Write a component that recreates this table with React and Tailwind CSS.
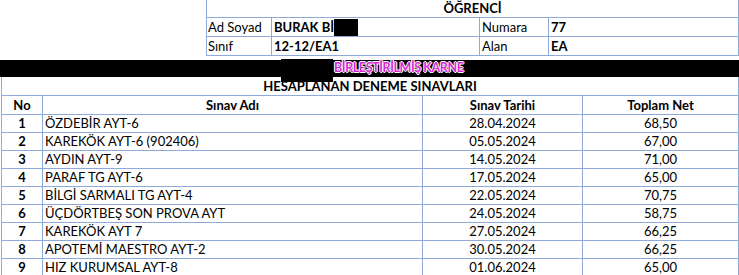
import React from "react";

const rows = [
  ["1", "ÖZDEBİR AYT-6", "28.04.2024", "68,50"],
  ["2", "KAREKÖK AYT-6 (902406)", "05.05.2024", "67,00"],
  ["3", "AYDIN AYT-9", "14.05.2024", "71,00"],
  ["4", "PARAF TG AYT-6", "17.05.2024", "65,00"],
  ["5", "BİLGİ SARMALI TG AYT-4", "22.05.2024", "70,75"],
  ["6", "ÜÇDÖRTBEŞ SON PROVA AYT", "24.05.2024", "58,75"],
  ["7", "KAREKÖK AYT 7", "27.05.2024", "66,25"],
  ["8", "APOTEMİ MAESTRO AYT-2", "30.05.2024", "66,25"],
  ["9", "HIZ KURUMSAL AYT-8", "01.06.2024", "65,00"],
];

export default function App() {
  return (
    <div
      className="relative w-[739px] h-[275px] overflow-hidden bg-white text-black text-[13px] leading-none"
      style={{ fontFamily: "Lato, 'Open Sans', sans-serif" }}
    >
      {/* top student info */}
      <div className="flex">
        <div className="w-[206px]" />
        <div className="w-[533px] border-l border-r border-[#8eaadb]">
          <div className="h-[18px] border-b border-[#8eaadb] flex items-center justify-center font-bold">
            ÖĞRENCİ
          </div>
          <div className="h-[19px] border-b border-[#8eaadb] flex">
            <div className="w-[65px] border-r border-[#8eaadb] flex items-center pl-[1px]">Ad Soyad</div>
            <div className="w-[208px] border-r border-[#8eaadb] flex items-center pl-[2px] font-bold">
              <span>BURAK Bİ</span>
              <span className="inline-block w-[24px] h-[17px] bg-black" />
            </div>
            <div className="w-[69px] border-r border-[#8eaadb] flex items-center pl-[2px]">Numara</div>
            <div className="flex-1 flex items-center pl-[2px] font-bold">77</div>
          </div>
          <div className="h-[19px] border-b border-[#8eaadb] flex">
            <div className="w-[65px] border-r border-[#8eaadb] flex items-center pl-[1px]">Sınıf</div>
            <div className="w-[208px] border-r border-[#8eaadb] flex items-center pl-[2px] font-bold">12-12/EA1</div>
            <div className="w-[69px] border-r border-[#8eaadb] flex items-center pl-[2px]">Alan</div>
            <div className="flex-1 flex items-center pl-[2px] font-bold">EA</div>
          </div>
        </div>
      </div>

      {/* black title bar */}
      <div className="mt-[4px] h-[17px] bg-black flex items-center pl-[334px]">
        <span
          className="font-bold text-[12.5px] tracking-[-0.4px] text-[#d42ad4]"
          style={{
            textShadow:
              "1px 0 0 #fff, -1px 0 0 #fff, 0 1px 0 #fff, 0 -1px 0 #fff",
          }}
        >
          BİRLEŞTİRİLMİŞ KARNE
        </span>
      </div>

      {/* exam table */}
      <div className="ml-[1px] w-[738px] border-l border-r border-[#8eaadb]">
        <div className="h-[19px] border-b border-[#8eaadb] flex items-center justify-center font-bold">
          HESAPLANAN DENEME SINAVLARI
        </div>
        <div className="h-[19px] border-b border-[#8eaadb] flex font-bold">
          <div className="w-[41px] border-r border-[#8eaadb] flex items-center justify-center">No</div>
          <div className="w-[380px] border-r border-[#8eaadb] flex items-center justify-center">Sınav Adı</div>
          <div className="w-[160px] border-r border-[#8eaadb] flex items-center justify-center">Sınav Tarihi</div>
          <div className="flex-1 flex items-center justify-center">Toplam Net</div>
        </div>
        {rows.map((r) => (
          <div key={r[0]} className="h-[18px] border-b border-[#8eaadb] flex">
            <div className="w-[41px] border-r border-[#8eaadb] flex items-center justify-center font-bold">{r[0]}</div>
            <div className="w-[380px] border-r border-[#8eaadb] flex items-center pl-[2px]">{r[1]}</div>
            <div className="w-[160px] border-r border-[#8eaadb] flex items-center justify-center">{r[2]}</div>
            <div className="flex-1 flex items-center justify-center">{r[3]}</div>
          </div>
        ))}
      </div>

      {/* redaction block over title bar */}
      <div className="absolute left-[281px] top-[59px] w-[52px] h-[23px] bg-black" />
    </div>
  );
}
